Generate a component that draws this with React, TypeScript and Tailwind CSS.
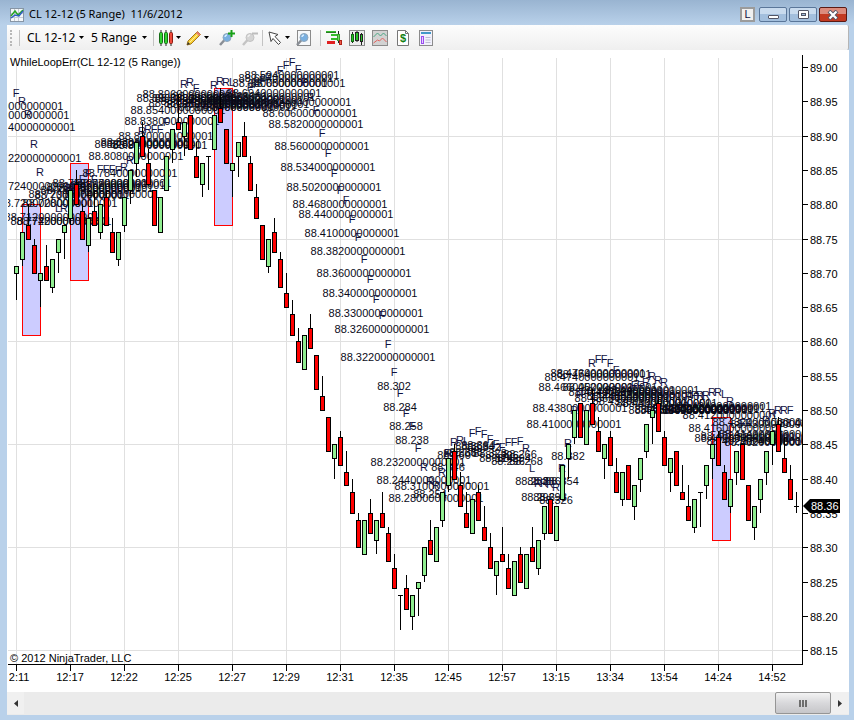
import type { ReactNode } from 'react';

// Five-tick range bars as [open, close], counted in ticks below 89.00.
const BARS = [
  [30, 29], [28, 24], [23, 25], [26, 30], [31, 30], [29, 31], [32, 28], [27, 25], [24, 23], [22, 18],
  [17, 20], [21, 25], [26, 22], [21, 23], [24, 20], [19, 23], [24, 27], [28, 24], [23, 19], [18, 15],
  [14, 11], [10, 13], [14, 17], [18, 23], [24, 19], [18, 13], [12, 9], [8, 9], [10, 8], [7, 12],
  [13, 16], [17, 14], [13, 13], [12, 7], [6, 8], [9, 14], [15, 14], [13, 11], [10, 13], [14, 18],
  [19, 22], [23, 28], [29, 25], [24, 27], [28, 32], [33, 35], [36, 39], [40, 43], [44, 39], [38, 41],
  [42, 47], [48, 50], [51, 56], [57, 55], [54, 58], [59, 61], [62, 65], [66, 70], [71, 66], [65, 68],
  [69, 66], [65, 67], [68, 72], [73, 76], [77, 77], [76, 79], [80, 77], [76, 75], [74, 70], [69, 71],
  [72, 67], [66, 62], [61, 57], [56, 60], [61, 64], [65, 67], [68, 63], [62, 66], [67, 69], [70, 73],
  [74, 72], [71, 72], [73, 76], [77, 72], [71, 75], [76, 71], [70, 72], [73, 69], [68, 64], [63, 68],
  [69, 64], [63, 58], [57, 55], [54, 50], [49, 54], [55, 50], [49, 52], [53, 56], [57, 55], [54, 58],
  [59, 62], [63, 59], [58, 63], [64, 61], [60, 57], [56, 52], [51, 50], [49, 53], [54, 58], [59, 57],
  [56, 61], [62, 63], [64, 66], [67, 63], [62, 62], [61, 58], [57, 55], [54, 58], [59, 63], [64, 60],
  [59, 56], [55, 60], [61, 66], [67, 64], [63, 60], [59, 56], [55, 53], [52, 56], [57, 59], [60, 63],
];

// [first bar, last bar, top tick, bottom tick]
const ZONES = [
  [1, 4, 20, 39],
  [9, 12, 14, 31],
  [33, 36, 3, 23],
  [116, 119, 51, 69],
];

// [bar, y, value]; a trailing ~ stands for the float noise 0000000001
const VALUES: [number, number, string][] = [
  [0, 106, '88.862~'], [1, 115, '88.850~'], [2, 127, '88.834~'], [3, 158, '88.822~'], [4, 186, '88.724~'],
  [5, 203, '88.720~'], [6, 217, '88.712~'], [7, 221, '88.772~'], [8, 221, '88.742~'], [9, 203, '88.728~'],
  [10, 194, '88.720~'], [11, 195, '88.730~'], [12, 190, '88.736~'], [13, 187, '88.744~'], [14, 183, '88.758~'],
  [15, 188, '88.752~'], [16, 194, '88.740~'], [17, 185, '88.762~'], [18, 183, '88.770~'], [19, 173, '88.784~'],
  [20, 156, '88.808~'], [21, 144, '88.826~'], [22, 142, '88.830~'], [23, 144, '88.826~'], [24, 145, '88.824~'],
  [25, 136, '88.830~'], [26, 121, '88.838~'], [27, 110, '88.854~'], [28, 98, '88.890~'], [29, 94, '88.896~'],
  [30, 103, '88.880~'], [31, 98, '88.888~'], [32, 101, '88.884~'], [33, 104, '88.880~'], [34, 96, '88.892~'],
  [35, 107, '88.876~'], [36, 103, '88.882~'], [37, 99, '88.886~'], [38, 107, '88.876~'], [39, 105, '88.878~'],
  [40, 100, '88.790~'], [41, 104, '88.756~'], [42, 97, '88.720~'], [43, 93, '88.694~'], [44, 83, '88.680~'],
  [45, 78, '88.664~'], [46, 75, '88.594~'], [47, 83, '88.650~'], [48, 102, '88.624~'], [49, 113, '88.606~'],
  [50, 124, '88.582~'], [51, 146, '88.560~'], [52, 167, '88.534~'], [53, 187, '88.502~'], [54, 204, '88.468~'],
  [55, 214, '88.440~'], [56, 233, '88.410~'], [57, 251, '88.382~'], [58, 273, '88.360~'], [59, 293, '88.340~'],
  [60, 313, '88.330~'], [61, 329, '88.326~'], [62, 357, '88.322~'], [63, 386, '88.302'], [64, 407, '88.284'],
  [65, 426, '88.258'], [66, 440, '88.238'], [67, 462, '88.232~'], [68, 480, '88.244~'], [69, 494, '88.254'],
  [70, 498, '88.280~'], [71, 486, '88.310~'], [72, 467, '88.346'], [73, 455, '88.360'], [74, 453, '88.366'],
  [75, 452, '88.358'], [76, 446, '88.368'], [77, 445, '88.364'], [78, 447, '88.342'], [79, 453, '88.328'],
  [80, 458, '88.314'], [81, 455, '88.306'], [82, 461, '88.296'], [83, 458, '88.294'], [84, 454, '88.266'],
  [85, 461, '88.268'], [86, 481, '88.288'], [87, 497, '88.296'], [88, 481, '88.286'], [89, 497, '88.298'],
  [90, 500, '88.326'], [91, 481, '88.354'], [92, 456, '88.382'], [93, 424, '88.410~'], [94, 408, '88.438~'],
  [95, 387, '88.466~'], [96, 377, '88.474~'], [97, 373, '88.476~'], [98, 374, '88.474~'], [99, 387, '88.452~'],
  [100, 392, '88.444~'], [101, 398, '88.436~'], [102, 391, '88.448~'], [103, 396, '88.440~'], [104, 401, '88.432~'],
  [105, 394, '88.442~'], [106, 390, '88.446~'], [107, 396, '88.440~'], [108, 403, '88.430~'], [109, 403, '88.430~'],
  [110, 410, '88.418~'], [111, 409, '88.420~'], [112, 410, '88.418~'], [113, 408, '88.422~'], [114, 409, '88.420~'],
  [115, 410, '88.418~'], [116, 409, '88.420~'], [117, 408, '88.422~'], [118, 406, '88.424~'], [119, 415, '88.412~'],
  [120, 428, '88.416~'], [121, 438, '88.406~'], [122, 436, '88.408~'], [123, 441, '88.402~'], [124, 422, '88.432~'],
  [125, 434, '88.414~'], [126, 442, '88.402~'], [127, 424, '88.430~'], [128, 437, '88.410~'], [129, 441, '88.404~'],
  [130, 423, '88.432'],
];

// [bar, y, letter]
const MARKS: [number, number, string][] = [
  [0, 93, 'F'], [1, 101, 'R'], [2, 114, 'R'], [3, 144, 'R'], [4, 172, 'R'], [7, 208, 'L'], [8, 208, 'R'],
  [9, 188, 'R'], [10, 187, 'R'], [11, 179, 'F'], [12, 173, 'F'], [13, 179, 'F'], [14, 169, 'F'], [15, 169, 'F'],
  [16, 169, 'F'], [17, 170, 'F'], [18, 167, 'R'], [19, 160, 'R'], [21, 131, 'R'], [22, 129, 'R'], [23, 129, 'F'],
  [24, 129, 'F'], [25, 122, 'F'], [28, 84, 'R'], [29, 82, 'R'], [30, 88, 'F'], [33, 85, 'R'], [34, 81, 'R'],
  [35, 82, 'R'], [36, 82, 'L'], [39, 87, 'F'], [40, 84, 'F'], [41, 80, 'F'], [42, 77, 'F'], [44, 70, 'F'],
  [45, 65, 'F'], [46, 62, 'F'], [47, 69, 'F'], [48, 82, 'F'], [49, 97, 'F'], [50, 110, 'F'], [51, 133, 'F'],
  [52, 153, 'F'], [53, 173, 'F'], [54, 190, 'F'], [55, 200, 'F'], [56, 219, 'F'], [57, 237, 'F'], [58, 259, 'F'],
  [59, 279, 'F'], [60, 299, 'F'], [61, 315, 'F'], [62, 344, 'F'], [63, 372, 'F'], [64, 393, 'F'], [65, 413, 'F'],
  [66, 426, 'F'], [67, 448, 'F'], [68, 467, 'R'], [69, 481, 'R'], [70, 485, 'R'], [71, 472, 'R'], [72, 453, 'R'],
  [73, 442, 'R'], [74, 440, 'R'], [75, 441, 'L'], [76, 433, 'F'], [77, 431, 'F'], [78, 434, 'F'], [79, 439, 'F'],
  [80, 444, 'F'], [81, 447, 'F'], [82, 442, 'F'], [83, 442, 'F'], [84, 441, 'F'], [85, 448, 'R'], [86, 468, 'L'],
  [87, 483, 'R'], [88, 483, 'R'], [89, 484, 'R'], [90, 487, 'R'], [91, 468, 'R'], [92, 443, 'R'], [93, 410, 'R'],
  [94, 394, 'R'], [96, 363, 'R'], [97, 359, 'F'], [98, 359, 'F'], [99, 363, 'F'], [100, 370, 'F'], [103, 385, 'F'],
  [104, 385, 'F'], [105, 382, 'R'], [106, 376, 'R'], [107, 380, 'R'], [108, 382, 'R'], [112, 396, 'F'], [113, 395, 'F'],
  [114, 395, 'R'], [115, 395, 'R'], [116, 392, 'R'], [117, 392, 'R'], [118, 394, 'L'], [119, 401, 'R'], [121, 423, 'F'],
  [122, 423, 'F'], [125, 420, 'R'], [126, 413, 'R'], [127, 410, 'R'], [128, 410, 'R'], [129, 410, 'F'],
];

const TIMES = [
  '12:11', '12:17', '12:22', '12:25', '12:27', '12:29', '12:31', '12:35',
  '12:45', '12:57', '13:15', '13:34', '13:54', '14:24', '14:52',
];

const barX = (i: number) => 16 + i * 6;
const tickY = (t: number) => Math.round(67 + t * 6.86);

function Chart() {
  const prices = Array.from({ length: 18 }, (_, i) => i * 5);
  return (
    <svg
      viewBox="7 50 842 642"
      className="block h-auto w-full bg-white font-['Liberation_Sans',Arial,sans-serif] text-[11px]"
      role="img"
      aria-label="CL 12-12 range bar chart"
    >
      <defs>
        <clipPath id="plot">
          <rect x="8" y="52" width="794" height="612" />
        </clipPath>
        <clipPath id="times">
          <rect x="9" y="664" width="800" height="24" />
        </clipPath>
      </defs>

      <g fill="#e0e0e0" shapeRendering="crispEdges">
        {TIMES.map((t, i) => (
          <rect key={t} x={barX(i * 9)} y="58" width="1" height="606" />
        ))}
        {[10, 25, 40, 55, 70, 85].map((t) => (
          <rect key={t} x="8" y={tickY(t)} width="794" height="1" />
        ))}
      </g>

      <g fill="#ccccff" stroke="#ff0000" shapeRendering="crispEdges">
        {ZONES.map(([a, b, top, bottom]) => (
          <rect key={a} x={barX(a) + 0.5} y={tickY(top) + 0.5} width={(b - a) * 6} height={tickY(bottom) - tickY(top)} />
        ))}
      </g>

      <g clipPath="url(#plot)" textAnchor="middle" fill="#0a0a18">
        {VALUES.map(([i, y, v]) => (
          <text key={i} x={barX(i)} y={y + 4}>
            {v.replace('~', '0000000001')}
          </text>
        ))}
        <g fill="#101040">
          {MARKS.map(([i, y, v]) => (
            <text key={i} x={barX(i)} y={y + 4}>
              {v}
            </text>
          ))}
        </g>
      </g>

      <g shapeRendering="crispEdges" stroke="#000">
        {BARS.map(([open, close], i) => {
          const up = close <= open;
          const high = up ? close : close - 5;
          const top = tickY(Math.min(open, close));
          const bottom = tickY(Math.max(open, close));
          const x = barX(i);
          return (
            <g key={i}>
              <path d={`M${x + 0.5} ${tickY(high)}V${tickY(high + 5)}`} />
              {open === close ? (
                <path d={`M${x - 2} ${top + 0.5}h5`} />
              ) : (
                <rect x={x - 1.5} y={top + 0.5} width="4" height={bottom - top} fill={up ? '#90ee90' : '#ff0000'} />
              )}
            </g>
          );
        })}
        <path d={`M796.5 ${tickY(62)}V${tickY(65)}M794 ${tickY(64) + 0.5}h5`} />
      </g>

      <g stroke="#000" fill="none" shapeRendering="crispEdges">
        <path d="M8 664.5H803M802.5 55V665" />
        {TIMES.map((t, i) => (
          <path key={t} d={`M${barX(i * 9) + 0.5} 665v6`} />
        ))}
        {prices.map((t) => (
          <path key={t} d={`M803 ${tickY(t) + 0.5}h5`} />
        ))}
      </g>

      <g fill="#000">
        <text x="10" y="66">WhileLoopErr(CL 12-12 (5 Range))</text>
        <text x="10" y="662">© 2012 NinjaTrader, LLC</text>
        {prices.map((t) => (
          <text key={t} x="810" y={tickY(t) + 5}>
            {(89 - t / 100).toFixed(2)}
          </text>
        ))}
        <g textAnchor="middle" clipPath="url(#times)">
          {TIMES.map((t, i) => (
            <text key={t} x={barX(i * 9)} y="681">
              {t}
            </text>
          ))}
        </g>
      </g>

      <path d="M803 506l7-7h30v14h-30z" fill="#000" />
      <text x="811" y="510" fill="#fff">88.36</text>
    </svg>
  );
}

function Caret() {
  return (
    <svg width="5" height="3" viewBox="0 0 5 3" aria-hidden="true">
      <path d="M0 0h5L2.500 3z" fill="#000" />
    </svg>
  );
}

function Icon({ children }: { children: ReactNode }) {
  return (
    <svg width="16" height="16" viewBox="0 0 16 16" fill="none" aria-hidden="true">
      {children}
    </svg>
  );
}

function Lens({ muted = false }: { muted?: boolean }) {
  return (
    <>
      <path d="M5.500 10L1 15" stroke={muted ? '#c4c4c4' : '#8a8f96'} strokeWidth="2.500" />
      <circle cx="8" cy="7.500" r="4" fill={muted ? '#d4d4d4' : '#78afe0'} stroke={muted ? '#c2c2c2' : '#8fa6ba'} />
      <path d="M6 7a2.200 2.200 0 0 1 2-2" stroke={muted ? '#eee' : '#d4ebff'} strokeWidth="1.500" />
    </>
  );
}

function Separator() {
  return <div className="mx-px h-4 w-px bg-[#c3c3c3]" />;
}

function ToolSelect({ label, value, className }: { label: string; value: string; className: string }) {
  return (
    <label className={`relative flex items-center ${className}`}>
      <select
        aria-label={label}
        className="h-5 w-full appearance-none bg-transparent text-xs leading-5 text-black outline-none"
        defaultValue={value}
      >
        <option>{value}</option>
      </select>
      <span className="pointer-events-none absolute right-[3px]">
        <Caret />
      </span>
    </label>
  );
}

function ToolButton({ label, menu = false, children }: { label: string; menu?: boolean; children: ReactNode }) {
  return (
    <button
      type="button"
      aria-label={label}
      className={`flex h-5 items-center justify-center gap-0.5 ${menu ? 'w-7' : 'w-[23px]'}`}
    >
      <Icon>{children}</Icon>
      {menu && <Caret />}
    </button>
  );
}

function Toolbar() {
  return (
    <div className="flex h-[25px] items-center rounded-r-xs border-r border-[#b5b5b5] bg-gradient-to-b from-[#fdfdfd] to-[#efefef]">
      <div className="ml-[3px] mr-1.5 h-4 w-0 border-l-2 border-dotted border-[#b8b8b8]" />
      <Separator />
      <ToolSelect label="Instrument" value="CL 12-12" className="ml-1.5 w-[60px]" />
      <ToolSelect label="Interval" value="5 Range" className="ml-1 w-[59px]" />
      <div className="w-0.5" />
      <Separator />
      <ToolButton label="Chart style" menu>
        <path d="M3 0v16M8 0v16M13 0v16" stroke="#222" />
        <rect x="1.500" y="2.500" width="3" height="11" rx="1" fill="#2fd32f" stroke="#176b17" />
        <rect x="6.500" y="2.500" width="3" height="11" rx="1" fill="#2fd32f" stroke="#176b17" />
        <rect x="11.500" y="2.500" width="3" height="11" rx="1" fill="#f04a3a" stroke="#8c1a12" />
      </ToolButton>
      <ToolButton label="Drawing tools" menu>
        <path d="M2 11L11.500 1.500l3 3L5 14l-4 1z" fill="#f8cf35" stroke="#a4781c" />
        <path d="M3.500 12.500L12.500 3.500" stroke="#fff0a0" />
        <path d="M11.500 1.500l3 3-1.500 1.500-3-3z" fill="#e57b72" />
        <path d="M1 15l1-3 2 2z" fill="#333" />
      </ToolButton>
      <div className="w-1" />
      <ToolButton label="Zoom in">
        <Lens />
        <path d="M12.500 0v7M9 3.500h7" stroke="#18a018" strokeWidth="2" />
      </ToolButton>
      <ToolButton label="Zoom out">
        <Lens muted />
        <path d="M10 3.500h6" stroke="#bdbdbd" strokeWidth="2" />
      </ToolButton>
      <Separator />
      <ToolButton label="Cursor" menu>
        <path d="M2 2l9 2.500-3 2 5.500 6-2 2-5.500-6-2 3z" fill="#fff" stroke="#444" />
      </ToolButton>
      <ToolButton label="Data box">
        <rect x="1.500" y="0.500" width="13" height="15" fill="#f7f9fb" stroke="#8b8b8b" />
        <Lens />
      </ToolButton>
      <div className="w-1" />
      <Separator />
      <ToolButton label="Chart trader">
        <path d="M0 2h10M5 5h6M5 9h6" stroke="#35bd2c" strokeWidth="2" />
        <path d="M0 2.500h10" stroke="#2a7a22" />
        <path d="M1 12.500h8" stroke="#e02020" strokeWidth="3" />
        <path d="M12.500 1v12" stroke="#222" />
        <rect x="11.500" y="4.500" width="2" height="6" fill="#6be05a" stroke="#3a9a2c" />
        <rect x="13.500" y="10.500" width="2" height="4" fill="#f25a4a" stroke="#b02318" />
      </ToolButton>
      <ToolButton label="Data series">
        <rect x="0.500" y="0.500" width="15" height="15" fill="#ececec" stroke="#8b8b8b" />
        <path d="M3.500 2v11M8 1v11M12.500 3v12" stroke="#222" />
        <rect x="2.500" y="4.500" width="2" height="7" fill="#25c525" stroke="#126b12" />
        <rect x="6.500" y="2.500" width="3" height="8" fill="#25c525" stroke="#222" />
        <rect x="11.500" y="4.500" width="2" height="7" fill="#25c525" stroke="#222" />
      </ToolButton>
      <ToolButton label="Indicators">
        <rect x="0.500" y="0.500" width="15" height="15" fill="#d2d2d2" stroke="#8b8b8b" />
        <path d="M1.500 7l4-4 3 3 3-3 3 3" stroke="#4ba784" />
        <path d="M1.500 13l4-3 2 1 3-3 4 4" stroke="#e36460" />
      </ToolButton>
      <ToolButton label="Strategies">
        <path d="M2.500 0.500h8l3 3v12h-11z" fill="#fff" stroke="#777" />
        <path d="M10.500 0.500v3h3" stroke="#777" />
        <text x="8" y="12" textAnchor="middle" fill="#128012" className="font-['Liberation_Sans',sans-serif] text-[11px] font-bold">
          $
        </text>
      </ToolButton>
      <ToolButton label="Properties">
        <rect x="1.500" y="0.500" width="13" height="15" fill="#f1f1fb" stroke="#8b8b8b" />
        <path d="M3 3h10" stroke="#4299c9" strokeWidth="2" />
        <rect x="3.500" y="6.500" width="2" height="7" fill="#e6d0ff" stroke="#9a4df0" />
        <path d="M7.500 7.500h5M7.500 10h5M7.500 12.500h5" stroke="#bdbdd4" />
      </ToolButton>
    </div>
  );
}

const windowButton =
  'flex h-[15px] w-7 items-center justify-center rounded-xs border border-[#5a7699] bg-gradient-to-b from-[#c9dbee] from-50% to-[#a3bfdd] to-50%';

function TitleBar() {
  return (
    <header className="flex h-[25px] items-center pt-1">
      <svg width="14" height="14" viewBox="0 0 14 14" className="ml-[3px]" aria-hidden="true">
        <rect x="0.500" y="0.500" width="13" height="13" fill="#f4f7fa" stroke="#8795a5" />
        <path d="M4.500 1v12M8.500 1v12M1 5.500h12M1 9.500h12" stroke="#c5ccd6" />
        <path d="M1 8l4-5 3 4 5-5" fill="none" stroke="#24a324" strokeWidth="1.500" />
        <path d="M1 10l4-3 4 1 4-5" fill="none" stroke="#2f5fc0" strokeWidth="1.500" />
      </svg>
      <h1 className="ml-[5px] whitespace-pre text-[11px] text-black">CL 12-12 (5 Range)  11/6/2012</h1>
      <div className="ml-auto mr-0.5 flex items-center gap-0.5">
        <button
          type="button"
          className="mr-0.5 flex size-[15px] items-center justify-center border-2 border-[#9b9b9b] bg-[#f0f0f0] font-['Liberation_Sans',sans-serif] text-[11px] leading-none text-[#101040]"
        >
          L
        </button>
        <button type="button" aria-label="Minimize" className={windowButton}>
          <span className="mt-1 h-1 w-[11px] rounded-[1px] border border-[#535666] bg-white" />
        </button>
        <button type="button" aria-label="Maximize" className={windowButton}>
          <span className="flex h-[9px] w-[11px] items-center justify-center rounded-[1px] border border-[#535666] bg-white">
            <span className="h-[3px] w-[5px] border border-[#535666] bg-[#a3bfdd]" />
          </span>
        </button>
        <button
          type="button"
          aria-label="Close"
          className="flex h-[15px] w-7 items-center justify-center rounded-xs border border-[#5b1a14] bg-gradient-to-b from-[#dc8b7d] from-50% to-[#c23a22] to-50%"
        >
          <svg width="12" height="10" viewBox="0 0 12 10" aria-hidden="true">
            <path d="M2 1l8 8M10 1l-8 8" stroke="#535666" strokeWidth="4" />
            <path d="M2.500 1.500l7 7M9.500 1.500l-7 7" stroke="#fff" strokeWidth="2.200" />
          </svg>
        </button>
      </div>
    </header>
  );
}

function ScrollBar() {
  return (
    <div className="flex h-[23px] bg-[#ebebeb]">
      <button type="button" aria-label="Scroll left" className="flex h-[22px] w-[17px] items-center justify-center bg-[#f0f0f0]">
        <svg width="4" height="7" viewBox="0 0 4 7" aria-hidden="true">
          <path d="M4 0v7L0 3.500z" fill="#333" />
        </svg>
      </button>
      <button
        type="button"
        aria-label="Scroll position"
        className="ml-auto flex h-[22px] w-14 items-center justify-center gap-px rounded-xs border border-[#959595] bg-gradient-to-b from-[#f3f3f3] from-0% via-[#d8d8db] via-50% to-[#c6c6c9]"
      >
        <span className="h-[7px] w-0.5 bg-[#6e6e6e]" />
        <span className="h-[7px] w-0.5 bg-[#6e6e6e]" />
        <span className="h-[7px] w-0.5 bg-[#6e6e6e]" />
      </button>
      <button type="button" aria-label="Scroll right" className="flex h-[22px] w-[18px] items-center justify-center bg-[#f0f0f0]">
        <svg width="4" height="7" viewBox="0 0 4 7" aria-hidden="true">
          <path d="M0 0v7l4-3.500z" fill="#333" />
        </svg>
      </button>
    </div>
  );
}

export default function App() {
  return (
    <div className="min-h-screen bg-[#b9d1ea] bg-[linear-gradient(to_bottom,#99b4d1,#b9d1ea_25px)] pb-[5px] pl-[7px] pr-[5px] font-['Noto_Sans','Open_Sans',sans-serif]">
      <TitleBar />
      <main>
        <Toolbar />
        <Chart />
        <ScrollBar />
      </main>
    </div>
  );
}
